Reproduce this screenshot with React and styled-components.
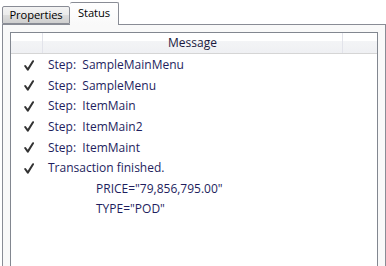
import styled, { createGlobalStyle } from 'styled-components';

const GlobalStyle = createGlobalStyle`
  body {
    margin: 0;
    font-family: "Open Sans", "Noto Sans", sans-serif;
    background: #fff;
  }
`;

const rows = [
  { check: true, text: 'Step:  SampleMainMenu' },
  { check: true, text: 'Step:  SampleMenu' },
  { check: true, text: 'Step:  ItemMain' },
  { check: true, text: 'Step:  ItemMain2' },
  { check: true, text: 'Step:  ItemMaint' },
  { check: true, text: 'Transaction finished.' },
  { check: false, text: 'PRICE="79,856,795.00"', indent: true },
  { check: false, text: 'TYPE="POD"', indent: true },
];

const Check = () => (
  <svg width="10" height="11" viewBox="0 0 10 11">
    <path d="M1.2 6 L3.8 9.6 L9 1.2" fill="none" stroke="#333" strokeWidth="2" strokeLinecap="round" strokeLinejoin="round" />
  </svg>
);

const App = () => {
  return (
    <Page>
      <GlobalStyle />
      <TabStrip>
        <Tab>Properties</Tab>
        <Tab $selected>Status</Tab>
      </TabStrip>
      <Panel>
        <ListBox>
          <Header>
            <HeaderCell />
            <HeaderCell $center>Message</HeaderCell>
            <HeaderCell $last />
          </Header>
          {rows.map((r, i) => (
            <Row key={i}>
              <CheckCell>{r.check && <Check />}</CheckCell>
              <MessageCell $indent={r.indent}>{r.text}</MessageCell>
            </Row>
          ))}
        </ListBox>
      </Panel>
    </Page>
  );
};

export default App;

const Page = styled.div`
  width: 386px;
  height: 266px;
  overflow: hidden;
  display: flex;
  flex-direction: column;
`;

const TabStrip = styled.div`
  display: flex;
  align-items: flex-end;
  height: 24px;
  padding-left: 2px;
  position: relative;
  z-index: 1;
`;

const Tab = styled.div`
  box-sizing: border-box;
  height: ${p => (p.$selected ? '23px' : '18px')};
  margin-bottom: ${p => (p.$selected ? '-1px' : '0')};
  padding: ${p => (p.$selected ? '2px 0 0 0' : '0')};
  width: ${p => (p.$selected ? '49px' : '68px')};
  text-align: center;
  border: 1px solid #898c95;
  border-bottom: ${p => (p.$selected ? 'none' : '1px solid #898c95')};
  border-left: ${p => (p.$selected ? 'none' : '1px solid #898c95')};
  border-radius: 2px 2px 0 0;
  background: ${p =>
    p.$selected
      ? 'linear-gradient(to bottom, #ffffff 0%, #f9f9f9 100%)'
      : 'linear-gradient(to bottom, #f3f3f3 0%, #ebebeb 50%, #dddddd 51%, #cfcfcf 100%)'};
  font-size: 11.2px;
  letter-spacing: -0.1px;
  line-height: 16px;
  color: #000;
`;

const Panel = styled.div`
  box-sizing: border-box;
  margin-left: 2px;
  width: 384px;
  flex: 1;
  border: 1px solid #898c95;
  border-bottom: none;
  background: #f9f9f9;
  padding: 7px 7px 0 7px;
  display: flex;
`;

const ListBox = styled.div`
  flex: 1;
  border: 1px solid #828790;
  border-bottom: none;
  background: #fff;
`;

const Header = styled.div`
  display: grid;
  grid-template-columns: 32px 300px 1fr;
  height: 21px;
  box-sizing: border-box;
  border-bottom: 1px solid #d5d5d5;
  background: linear-gradient(to bottom, #ffffff 0%, #ffffff 40%, #f3f4f6 41%, #eff0f3 100%);
`;

const HeaderCell = styled.div`
  border-right: ${p => (p.$last ? 'none' : '1px solid #e2e3ea')};
  font-size: 12px;
  line-height: 20px;
  color: #1a1a40;
  text-align: ${p => (p.$center ? 'center' : 'left')};
`;

const Row = styled.div`
  display: grid;
  grid-template-columns: 32px 1fr;
  height: 20.57px;
  box-sizing: border-box;
  padding-top: 1px;
  align-items: center;
`;

const CheckCell = styled.div`
  display: flex;
  justify-content: center;
  padding-left: 4px;
  padding-top: 1px;
`;

const MessageCell = styled.div`
  padding-left: ${p => (p.$indent ? '53px' : '5px')};
  font-size: 12px;
  color: #1e1e5e;
  white-space: pre;
`;
